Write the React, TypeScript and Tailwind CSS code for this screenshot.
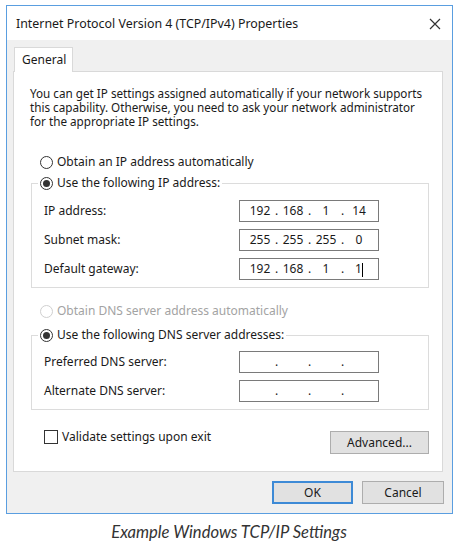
import React from 'react';

const FONT = { fontFamily: '"Noto Sans", "Open Sans", sans-serif' };

function Radio({ checked = false, disabled = false }: { checked?: boolean; disabled?: boolean }) {
  return (
    <span
      className={`w-[13px] h-[13px] rounded-full border bg-white flex items-center justify-center shrink-0 ${
        disabled ? 'border-[#cfcfcf]' : 'border-[#333333]'
      }`}
    >
      {checked && <span className="w-[7px] h-[7px] rounded-full bg-[#333333]" />}
    </span>
  );
}

function IpField({ parts, cursor = false }: { parts: string[]; cursor?: boolean }) {
  return (
    <div className="w-[140px] h-[22px] border border-[#7a7a7a] bg-white flex items-center pl-[7px] text-[12px] text-[#1a1a1a]">
      {parts.map((p, i) => (
        <React.Fragment key={i}>
          <span className="w-[26px] text-center">
            {p}
            {cursor && i === 3 && <span className="inline-block w-px h-[14px] bg-black align-middle" />}
          </span>
          {i < 3 && <span className="w-[7px] text-center">.</span>}
        </React.Fragment>
      ))}
    </div>
  );
}

function Row({ label, parts, cursor }: { label: string; parts: string[]; cursor?: boolean }) {
  return (
    <div className="flex items-center">
      <span className="w-[195px]">{label}</span>
      <IpField parts={parts} cursor={cursor} />
    </div>
  );
}

export default function App() {
  return (
    <div className="w-[458px] h-[550px] bg-white relative overflow-hidden text-[12px] text-[#1a1a1a]" style={FONT}>
      <div className="ml-[6px] mt-[5px] w-[447px] h-[509px] border border-[#5a9ee0] flex flex-col">
        {/* title bar */}
        <div className="h-[34px] bg-white flex items-center justify-between pl-[9px] pr-[11px] shrink-0">
          <span className="text-[12.4px] pt-[2px]">Internet Protocol Version 4 (TCP/IPv4) Properties</span>
          <svg width="12" height="12" viewBox="0 0 12 12" className="mt-[1px]">
            <path d="M1 1 L11 11 M11 1 L1 11" stroke="#333" strokeWidth="1.2" />
          </svg>
        </div>

        {/* body */}
        <div className="flex-1 bg-[#f0f0f0] pl-[6px] pr-[8px] pt-[7px]">
          <div className="flex">
            <div className="ml-[1px] w-[59px] h-[25px] bg-white border border-b-0 border-[#d9d9d9] pl-[7px] pt-[3px] relative z-10 -mb-px">
              General
            </div>
          </div>
          <div className="w-[430px] h-[401px] bg-white border border-[#d9d9d9] pt-[14px]">
            <p className="pl-[16px] leading-[14px] text-[11.7px]">
              You can get IP settings assigned automatically if your network supports
              <br />
              this capability. Otherwise, you need to ask your network administrator
              <br />
              for the appropriate IP settings.
            </p>

            <div className="mt-[26px] ml-[26px] flex items-center gap-[4px] h-[16px]">
              <Radio />
              <span>Obtain an IP address automatically</span>
            </div>

            <fieldset className="ml-[17px] mt-[5px] w-[398px] border border-[#dcdcdc] pl-[12px] pt-[9px] pb-[7px] flex flex-col gap-[7px]">
              <legend className="-ml-[6px] px-[2px] h-[16px] flex items-center gap-[4px]">
                <Radio checked />
                <span>Use the following IP address:</span>
              </legend>
              <Row label="IP address:" parts={['192', '168', '1', '14']} />
              <Row label="Subnet mask:" parts={['255', '255', '255', '0']} />
              <Row label="Default gateway:" parts={['192', '168', '1', '1']} cursor />
            </fieldset>

            <div className="mt-[15px] ml-[26px] flex items-center gap-[4px] h-[16px] text-[#a3a3a3]">
              <Radio disabled />
              <span>Obtain DNS server address automatically</span>
            </div>

            <fieldset className="ml-[17px] mt-[8px] w-[398px] border border-[#dcdcdc] pl-[12px] pt-[8px] pb-[7px] flex flex-col gap-[7px]">
              <legend className="-ml-[6px] px-[2px] h-[16px] flex items-center gap-[4px]">
                <Radio checked />
                <span>Use the following DNS server addresses:</span>
              </legend>
              <Row label="Preferred DNS server:" parts={['', '', '', '']} />
              <Row label="Alternate DNS server:" parts={['', '', '', '']} />
            </fieldset>

            <div className="ml-[17px] mt-[20px] w-[398px] flex justify-between items-start">
              <div className="flex items-center gap-[4px] pl-[13px] h-[14px]">
                <span className="w-[14px] h-[14px] border border-[#333333] bg-white" />
                <span>Validate settings upon exit</span>
              </div>
              <button className="mt-[1px] w-[99px] h-[23px] bg-[#e1e1e1] border border-[#adadad]">Advanced...</button>
            </div>
          </div>

          <div className="flex justify-end gap-[9px] mt-[9px]">
            <button className="w-[81px] h-[23px] bg-[#e1e1e1] border-2 border-[#3d8ad6]">OK</button>
            <button className="w-[82px] h-[23px] bg-[#e1e1e1] border border-[#adadad]">Cancel</button>
          </div>
        </div>
      </div>

      <p className="text-center italic text-[16.6px] leading-[20px] text-[#333] mt-[8px]" style={{ fontFamily: 'Lato, "Open Sans", sans-serif' }}>
        Example Windows TCP/IP Settings
      </p>
    </div>
  );
}
